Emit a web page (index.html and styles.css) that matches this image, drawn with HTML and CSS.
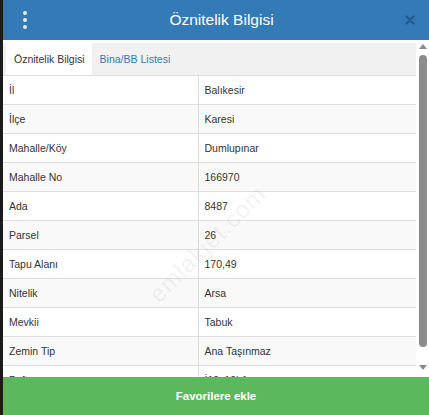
FILE: index.html
```html
<!DOCTYPE html>
<html lang="tr">
<head>
    <meta charset="UTF-8">
    <meta name="viewport" content="width=device-width, initial-scale=1.0">
    <title>Öznitelik Bilgisi</title>
    <link rel="stylesheet" href="styles.css">
</head>
<body>
    <div class="edge"></div>
    <div class="modal">
        <div class="modal-head">
            <div class="menu">
                <span></span><span></span><span></span>
            </div>
            <h2>Öznitelik Bilgisi</h2>
            <div class="close">
                <svg width="10" height="10" viewBox="0 0 10 10">
                    <path d="M1.5 1.5 L8.5 8.5 M8.5 1.5 L1.5 8.5" stroke="#23588b" stroke-width="2.4" stroke-linecap="round"/>
                </svg>
            </div>
        </div>
        <div class="modal-body">
            <div class="pane">
                <div class="tabs">
                    <div class="tab active">Öznitelik Bilgisi</div>
                    <div class="tab">Bina/BB Listesi</div>
                </div>
                <table class="info">
                    <tr><td>İl</td><td>Balıkesir</td></tr>
                    <tr><td>İlçe</td><td>Karesi</td></tr>
                    <tr><td>Mahalle/Köy</td><td>Dumlupınar</td></tr>
                    <tr><td>Mahalle No</td><td>166970</td></tr>
                    <tr><td>Ada</td><td>8487</td></tr>
                    <tr><td>Parsel</td><td>26</td></tr>
                    <tr><td>Tapu Alanı</td><td>170,49</td></tr>
                    <tr><td>Nitelik</td><td>Arsa</td></tr>
                    <tr><td>Mevkii</td><td>Tabuk</td></tr>
                    <tr><td>Zemin Tip</td><td>Ana Taşınmaz</td></tr>
                    <tr><td>Pafta</td><td>İ19c19b1c</td></tr>
                </table>
                <div class="watermark">emlakjet.com</div>
            </div>
            <div class="scrollbar">
                <div class="arrow up"></div>
                <div class="thumb"></div>
                <div class="arrow down"></div>
            </div>
        </div>
        <div class="fav">Favorilere ekle</div>
    </div>
</body>
</html>
```

FILE: styles.css
```css
*{
    margin: 0;
    padding: 0;
    box-sizing: border-box;
}
html,body{
    height: 100%;
}
body{
    display: flex;
    background-color: #1d1a1a;
    font-family: "Liberation Sans", Arial, sans-serif;
    overflow: hidden;
}
.edge{
    width: 3px;
    flex-shrink: 0;
}
.modal{
    flex: 1;
    display: flex;
    flex-direction: column;
    background-color: #fff;
}
.modal-head{
    height: 40px;
    flex-shrink: 0;
    background-color: #337ab7;
    display: flex;
    align-items: center;
    justify-content: space-between;
    padding: 0 14px 0 17px;
}
.modal-head h2{
    color: #fff;
    font-size: 15.5px;
    font-weight: normal;
    margin-left: 8px;
}
.menu{
    display: flex;
    flex-direction: column;
    gap: 2.5px;
    width: 10px;
    align-items: center;
}
.menu span{
    width: 4.5px;
    height: 4.5px;
    border-radius: 50%;
    background-color: #e4eef8;
}
.close{
    width: 10px;
    height: 10px;
    display: flex;
    opacity: .9;
}
.modal-body{
    flex: 1;
    display: flex;
    min-height: 0;
    overflow: hidden;
}
.pane{
    flex: 1;
    padding-top: 3px;
    overflow: hidden;
    position: relative;
}
.tabs{
    display: flex;
    height: 32px;
    background-color: #f1f1f1;
    padding-left: 3px;
}
.tab{
    display: flex;
    align-items: center;
    padding: 0 9px 0 8px;
    font-size: 10.5px;
    color: #337ab7;
}
.tab.active{
    background-color: #fff;
    color: #333;
    padding: 0 7px 0 8px;
}
.info{
    width: 100%;
    border-collapse: collapse;
    font-size: 10.5px;
    color: #333;
}
.info td{
    height: 29px;
    border-top: 1px solid #dedede;
    padding: 0 6px;
}
.info td:first-child{
    width: 195px;
    border-right: 1px solid #dedede;
}
.info tr:nth-child(even){
    background-color: #f9f9f9;
}
.watermark{
    position: absolute;
    left: 128px;
    top: 190px;
    transform: rotate(-45deg);
    font-size: 24px;
    color: rgba(150,150,150,.12);
    letter-spacing: 1px;
}
.scrollbar{
    width: 13px;
    flex-shrink: 0;
    display: flex;
    flex-direction: column;
    align-items: center;
    padding: 4px 0 4px;
    background-color: #fff;
}
.arrow{
    width: 0;
    height: 0;
    border-left: 4px solid transparent;
    border-right: 4px solid transparent;
}
.arrow.up{
    border-bottom: 5px solid #8a8a8a;
}
.arrow.down{
    border-top: 5px solid #8a8a8a;
}
.thumb{
    width: 8px;
    height: 292px;
    margin: 6px 0 18px;
    border-radius: 4px;
    background-color: #8c8c8c;
}
.fav{
    height: 38px;
    flex-shrink: 0;
    background-color: #5cb85c;
    color: #fff;
    font-size: 11.5px;
    font-weight: bold;
    display: flex;
    align-items: center;
    justify-content: center;
}
```
